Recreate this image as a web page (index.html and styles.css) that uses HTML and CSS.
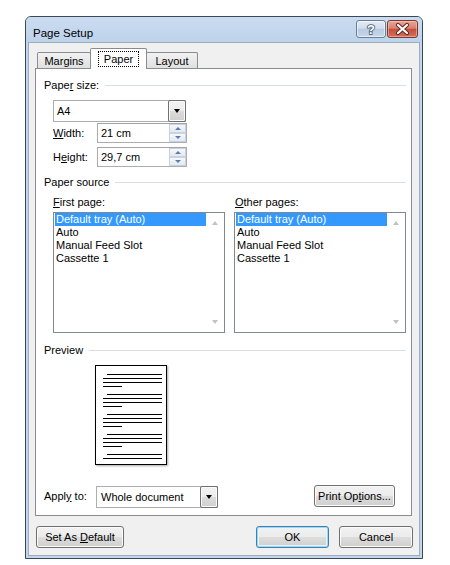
FILE: index.html
```html
<!DOCTYPE html>
<html>
<head>
<meta charset="utf-8">
<title>Page Setup</title>
<link rel="stylesheet" href="styles.css">
</head>
<body>
<div class="window">
  <div class="titlebar">
    <span class="title">Page Setup</span>
    <div class="caption-btns">
      <div class="cap cap-help">
        <svg width="28" height="16" viewBox="0 0 28 16"><text x="14" y="13" text-anchor="middle" class="qmark">?</text></svg>
      </div>
      <div class="cap cap-close">
        <svg width="29" height="16" viewBox="0 0 29 16">
          <path d="M10 4 L19 12 M19 4 L10 12" stroke="#5a2a22" stroke-width="4.2" stroke-linecap="round" fill="none"/>
          <path d="M10 4 L19 12 M19 4 L10 12" stroke="#fff" stroke-width="2.2" stroke-linecap="round" fill="none"/>
        </svg>
      </div>
    </div>
  </div>
  <div class="client">
    <div class="tabs">
      <div class="tab tab-margins">Margins</div>
      <div class="tab tab-paper active"><span class="focus">Paper</span></div>
      <div class="tab tab-layout">Layout</div>
    </div>
    <div class="panel">
      <div class="group-head"><span>Pape<u>r</u> size:</span><span class="sep"></span></div>
      <div class="combo combo-size">
        <span class="combo-text">A4</span>
        <span class="drop"><span class="tri"></span></span>
      </div>
      <div class="field-row row-width">
        <span class="field-label"><u>W</u>idth:</span>
        <div class="spin">
          <span class="spin-text">21 cm</span>
          <span class="spin-btns"><span class="sb"><span class="up"></span></span><span class="sb"><span class="down"></span></span></span>
        </div>
      </div>
      <div class="field-row row-height">
        <span class="field-label">H<u>e</u>ight:</span>
        <div class="spin">
          <span class="spin-text">29,7 cm</span>
          <span class="spin-btns"><span class="sb"><span class="up"></span></span><span class="sb"><span class="down"></span></span></span>
        </div>
      </div>

      <div class="group-head head-source"><span>Paper source</span><span class="sep"></span></div>
      <div class="lists">
        <div class="list-col">
          <div class="list-label"><u>F</u>irst page:</div>
          <div class="list">
            <div class="items">
              <div class="row sel">Default tray (Auto)</div>
              <div class="row">Auto</div>
              <div class="row">Manual Feed Slot</div>
              <div class="row">Cassette 1</div>
            </div>
            <div class="scroll"><span class="sa-up"></span><span class="sa-down"></span></div>
          </div>
        </div>
        <div class="list-col">
          <div class="list-label"><u>O</u>ther pages:</div>
          <div class="list">
            <div class="items">
              <div class="row sel">Default tray (Auto)</div>
              <div class="row">Auto</div>
              <div class="row">Manual Feed Slot</div>
              <div class="row">Cassette 1</div>
            </div>
            <div class="scroll"><span class="sa-up"></span><span class="sa-down"></span></div>
          </div>
        </div>
      </div>

      <div class="group-head head-preview"><span>Preview</span><span class="sep"></span></div>
      <div class="page">
        <svg width="70" height="98" viewBox="0 0 70 98" shape-rendering="crispEdges">
          <g stroke="#000" stroke-width="1">
            <path d="M11 8.5H66M7 12.5H66M7 16.5H66M7 20.5H26"/>
            <path d="M11 28.5H66M7 32.5H66M7 36.5H66M7 40.5H26"/>
            <path d="M11 48.5H66M7 52.5H66M7 56.5H66M7 60.5H26"/>
            <path d="M11 68.5H66M7 72.5H66M7 76.5H66M7 80.5H26"/>
            <path d="M11 88.5H66M7 92.5H66"/>
          </g>
        </svg>
      </div>

      <div class="apply-row">
        <span class="apply-label">Appl<u>y</u> to:</span>
        <div class="combo combo-apply">
          <span class="combo-text">Whole document</span>
          <span class="drop"><span class="tri"></span></span>
        </div>
        <div class="btn btn-print"><span>Print Op<u>t</u>ions...</span></div>
      </div>
    </div>
    <div class="footer">
      <div class="btn btn-default"><span>Set As <u>D</u>efault</span></div>
      <div class="btn btn-ok"><span>OK</span></div>
      <div class="btn btn-cancel"><span>Cancel</span></div>
    </div>
  </div>
</div>
</body>
</html>
```
FILE: styles.css
```css
* { box-sizing: border-box; }
html, body { margin: 0; padding: 0; background: #fff; }
body {
  font-family: "Liberation Sans", Arial, sans-serif;
  font-size: 11px;
  color: #000;
}
u { text-decoration: underline; text-underline-offset: 1px; }

.window {
  margin: 16px 0 0 25px;
  width: 398px;
  height: 543px;
  border: 1px solid #3a4858;
  border-radius: 6px 6px 0 0;
  background: #c1d5eb;
  display: flex;
  flex-direction: column;
  padding: 0 2px 2px 2px;
}

.titlebar {
  height: 25px;
  margin: 0 -2px;
  padding: 3px 4px 0 7px;
  display: flex;
  align-items: flex-start;
  justify-content: space-between;
  background: linear-gradient(#cbdcf0, #bdd3eb);
  border-radius: 5px 5px 0 0;
}
.title {
  margin-top: 6px;
  font-size: 11.5px;
  line-height: 14px;
  color: #000;
}
.caption-btns { display: flex; }
.cap {
  height: 18px;
  border-radius: 3px;
  display: flex;
  align-items: center;
  justify-content: center;
}
.cap-help {
  width: 30px;
  border: 1px solid #6b7d94;
  background: linear-gradient(#e3ebf5 0%, #d2deec 45%, #b9cbe1 52%, #c7d7ea 100%);
  box-shadow: inset 0 0 0 1px rgba(255,255,255,0.55);
}
.cap-close {
  width: 31px;
  margin-left: 1px;
  border: 1px solid #7e372d;
  background: linear-gradient(#e9a597 0%, #db8070 45%, #c54e3c 52%, #d2705c 100%);
  box-shadow: inset 0 0 0 1px rgba(255,220,210,0.45);
}
.qmark {
  font-family: "Liberation Sans", Arial, sans-serif;
  font-size: 13px;
  font-weight: bold;
  fill: #fff;
  stroke: #44566e;
  stroke-width: 1.6px;
  paint-order: stroke;
}

.client {
  flex: 1;
  background: #f0f0f0;
  border: 1px solid #9eabba;
  display: flex;
  flex-direction: column;
  padding-top: 5px;
}

.tabs {
  display: flex;
  align-items: flex-end;
  height: 20px;
  padding-left: 8px;
  position: relative;
  z-index: 1;
}
.tab {
  height: 16px;
  border: 1px solid #898c95;
  border-bottom: none;
  border-radius: 2px 2px 0 0;
  background: linear-gradient(#f2f2f2, #e0e0e0);
  text-align: center;
  line-height: 14px;
  padding-top: 1px;
}
.tab-margins { width: 54px; }
.tab-paper {
  width: 57px;
  margin-left: -1px;
  height: 21px;
  margin-bottom: -1px;
  background: #fff;
  padding-top: 3px;
  position: relative;
  z-index: 2;
}
.tab-layout { width: 52px; margin-left: -1px; }
.focus {
  display: inline-block;
  outline: 1px dotted #000;
  outline-offset: 0;
  padding: 0 5px;
  line-height: 14px;
}

.panel {
  margin: 0 7px 0 6px;
  height: 448px;
  border: 1px solid #898c95;
  background: #fff;
  padding: 10px 5px 0 8px;
}

.group-head {
  display: flex;
  align-items: center;
  height: 13px;
  line-height: 13px;
  white-space: nowrap;
}
.group-head .sep {
  flex: 1;
  height: 1px;
  background: #d5dfe5;
  margin-left: 6px;
}
.head-source { margin-top: 9px; }
.head-preview { margin-top: 11px; }

.combo {
  display: flex;
  align-items: center;
  height: 22px;
  border: 1px solid #abadb3;
  background: #fff;
}
.combo-text { flex: 1; padding-left: 3px; white-space: nowrap; }
.drop {
  width: 18px;
  align-self: stretch;
  margin: -1px -1px -1px 0;
  border: 1px solid #707070;
  border-radius: 2px;
  background: linear-gradient(#f3f3f3 0%, #ebebeb 50%, #dcdcdc 51%, #cfcfcf 100%);
  box-shadow: inset 0 0 0 1px #fbfbfb;
  display: flex;
  align-items: center;
  justify-content: center;
}
.tri {
  width: 0;
  height: 0;
  border-left: 3.5px solid transparent;
  border-right: 3.5px solid transparent;
  border-top: 4px solid #000;
}
.combo-size { margin: 8px 0 0 9px; width: 133px; }

.field-row {
  display: flex;
  align-items: center;
  margin-left: 9px;
  height: 20px;
}
.row-width { margin-top: 1px; }
.row-height { margin-top: 4px; }
.field-label { width: 44px; }
.spin {
  width: 90px;
  height: 20px;
  border: 1px solid #abadb3;
  border-top-color: #a2a4aa;
  background: #fff;
  display: flex;
  align-items: center;
}
.spin-text { flex: 1; padding-left: 3px; }
.spin-btns {
  width: 17px;
  align-self: stretch;
  display: flex;
  flex-direction: column;
}
.sb {
  flex: 1;
  border: 1px solid #c9d2de;
  background: linear-gradient(#f6f8fa, #e3e9f0);
  display: flex;
  align-items: center;
  justify-content: center;
}
.up, .down {
  width: 0; height: 0;
  border-left: 3px solid transparent;
  border-right: 3px solid transparent;
}
.up { border-bottom: 3px solid #5b7bb0; }
.down { border-top: 3px solid #5b7bb0; }

.lists {
  display: flex;
  margin: 7px 0 0 9px;
  gap: 9px;
}
.list-col { width: 172px; }
.list-label { height: 13px; line-height: 13px; }
.list-col + .list-col .list-label { padding-left: 1px; }
.list {
  margin-top: 3px;
  height: 121px;
  border: 1px solid #828790;
  background: #fff;
  display: flex;
}
.items { flex: 1; padding-left: 1px; }
.row {
  height: 13px;
  line-height: 13px;
  padding-left: 1px;
  white-space: nowrap;
}
.row.sel { background: #3399ff; color: #fff; }
.scroll {
  width: 17px;
  margin-right: 1px;
  display: flex;
  flex-direction: column;
  justify-content: space-between;
  align-items: center;
  padding: 8px 0 8px;
}
.sa-up, .sa-down {
  width: 0; height: 0;
  border-left: 3.5px solid transparent;
  border-right: 3.5px solid transparent;
}
.sa-up { border-bottom: 4px solid #c2c2c2; }
.sa-down { border-top: 4px solid #c2c2c2; }

.page {
  margin: 8px 0 0 51px;
  width: 72px;
  height: 100px;
  border: 1px solid #000;
  background: #fff;
  box-shadow: 1px 1px 2px rgba(0,0,0,0.35);
}
.page svg { display: block; }

.apply-row {
  display: flex;
  align-items: center;
  margin-top: 20px;
  height: 22px;
}
.apply-label { width: 52px; }
.combo-apply { width: 122px; margin-top: 1px; }
.combo-apply .combo-text { padding-left: 4px; }

.btn {
  height: 22px;
  border: 1px solid #707070;
  border-radius: 3px;
  background: linear-gradient(#f2f2f2 0%, #ebebeb 50%, #dddddd 51%, #cfcfcf 100%);
  box-shadow: inset 0 0 0 1px #fbfbfb;
  display: flex;
  align-items: center;
  justify-content: center;
  white-space: nowrap;
}
.btn-print { width: 81px; margin-left: auto; margin-right: 11px; }

.footer {
  display: flex;
  margin: 10px 6px 0 7px;
}
.btn-default { width: 88px; }
.btn-ok {
  width: 73px;
  margin-left: auto;
  border-color: #3c7fb1;
  box-shadow: inset 0 0 0 1px #9fd7f6, inset 0 0 0 2px #e6f5fd;
}
.btn-cancel { width: 74px; margin-left: 10px; }
```
